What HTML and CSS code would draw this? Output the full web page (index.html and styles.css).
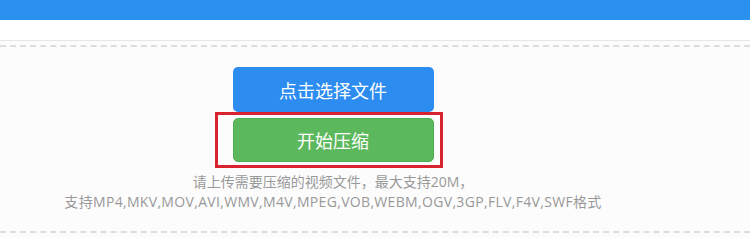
FILE: index.html
```html
<!DOCTYPE html>
<html lang="zh-CN">
<head>
<meta charset="utf-8">
<title>视频压缩</title>
<link rel="stylesheet" href="styles.css">
</head>
<body>
<header class="topbar"></header>
<main class="card">
  <section class="dropzone">
    <div class="content">
      <button class="btn btn-blue" type="button">点击选择文件</button>
      <div class="start-wrap">
        <button class="btn btn-green" type="button">开始压缩</button>
        <span class="highlight"></span>
      </div>
      <p class="hint">请上传需要压缩的视频文件，最大支持20M，<br><span class="formats">支持MP4,MKV,MOV,AVI,WMV,M4V,MPEG,VOB,WEBM,OGV,3GP,FLV,F4V,SWF格式</span></p>
    </div>
  </section>
</main>
</body>
</html>
```
FILE: styles.css
```css
html, body {
  margin: 0;
  padding: 0;
  background: #ffffff;
  overflow: hidden;
  font-family: "Open Sans", "Noto Sans CJK SC", sans-serif;
}

.topbar {
  height: 20px;
  background: #2a91ef;
  margin-bottom: 20px;
}

.card {
  background: #fcfcfc;
  border-top: 1px solid #e6e6e6;
  box-shadow: 0 3px 5px rgba(0, 0, 0, 0.08);
  padding: 4px 0 5px;
  margin: 0 -10px;
}

.dropzone {
  border-top: 2px dashed #dddddd;
  border-bottom: 2px dashed #dddddd;
  padding: 20px 0 19px 10px;
}

.content {
  width: 666px;
  display: flex;
  flex-direction: column;
  align-items: center;
}

.btn {
  display: block;
  width: 201px;
  border: none;
  border-radius: 5px;
  color: #ffffff;
  font-family: "Noto Sans CJK SC", sans-serif;
  font-size: 18px;
  padding: 0;
  margin: 0;
}

.btn-blue {
  height: 45px;
  background: #2d8cf0;
}

.start-wrap {
  position: relative;
  margin-top: 6px;
}

.btn-green {
  height: 44px;
  background: #5cb85c;
  border: 1px solid #4cae4c;
}

.highlight {
  position: absolute;
  left: -18px;
  top: -6px;
  right: -9px;
  bottom: -6px;
  border: 3px solid #d9232e;
  pointer-events: none;
}

.hint {
  margin: 10px 0 0;
  font-family: "Open Sans", "Noto Sans CJK SC", sans-serif;
  font-size: 14px;
  line-height: 20px;
  color: #999999;
  text-align: center;
}

.formats {
  letter-spacing: 0.33px;
}
```
